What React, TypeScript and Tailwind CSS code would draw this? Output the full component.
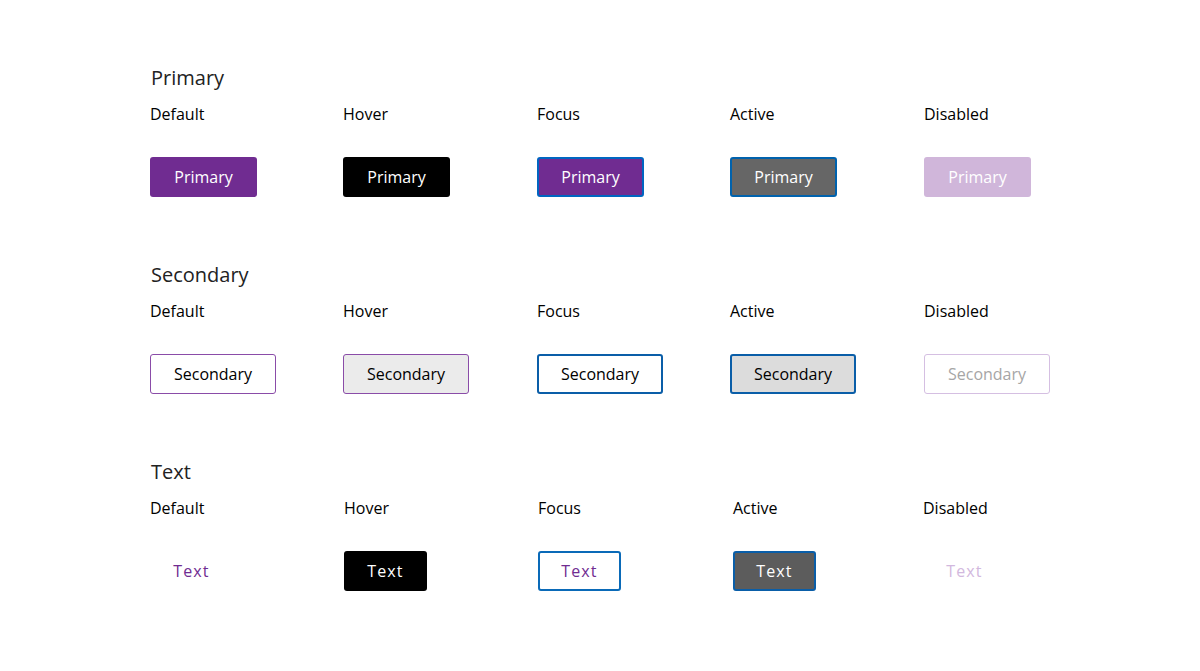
import React from "react";

const states = ["Default", "Hover", "Focus", "Active", "Disabled"];

const base =
  "h-10 rounded-[3px] text-[16px] leading-none flex items-center justify-center";

const Section = ({
  title,
  cols,
  children,
}: {
  title: string;
  cols: string;
  children: React.ReactNode[];
}) => (
  <section className="h-[197px]">
    <h2 className="text-[20px] leading-7 text-[#222] pl-px">{title}</h2>
    <div className={`grid ${cols} mt-[10px]`}>
      {states.map((s, i) => (
        <div key={s} className="flex flex-col">
          <span className="text-[16px] leading-6 text-black">{s}</span>
          <div className="mt-[31px]">{children[i]}</div>
        </div>
      ))}
    </div>
  </section>
);

export default function App() {
  return (
    <div
      className="w-[1200px] h-[671px] bg-white pl-[150px] pt-[64px]"
      style={{ fontFamily: '"Open Sans", sans-serif' }}
    >
      <Section title="Primary" cols="grid-cols-[193px_194px_193px_194px_193px]">
        {[
          <button className={`${base} w-[107px] bg-[#702c91] text-white`}>Primary</button>,
          <button className={`${base} w-[107px] bg-black text-white`}>Primary</button>,
          <button className={`${base} w-[107px] bg-[#702c91] text-white border-2 border-[#0065c1]`}>Primary</button>,
          <button className={`${base} w-[107px] bg-[#666666] text-white border-2 border-[#0062ad]`}>Primary</button>,
          <button className={`${base} w-[107px] bg-[#d0b6da] text-white`}>Primary</button>,
        ]}
      </Section>
      <Section title="Secondary" cols="grid-cols-[193px_194px_193px_194px_193px]">
        {[
          <button className={`${base} w-[126px] bg-white text-black border border-[#8a4ca8]`}>Secondary</button>,
          <button className={`${base} w-[126px] bg-[#ebebeb] text-black border border-[#8a4ca8]`}>Secondary</button>,
          <button className={`${base} w-[126px] bg-white text-black border-2 border-[#0a5ea8]`}>Secondary</button>,
          <button className={`${base} w-[126px] bg-[#dcdcdc] text-black border-2 border-[#0a5ea8]`}>Secondary</button>,
          <button className={`${base} w-[126px] bg-white text-[#a6a6a6] border border-[#d5bfe2]`}>Secondary</button>,
        ]}
      </Section>
      <Section title="Text" cols="grid-cols-[194px_194px_195px_190px_193px]">
        {[
          <button className={`${base} w-[83px] tracking-[0.07em] text-[#702c91]`}>Text</button>,
          <button className={`${base} w-[83px] tracking-[0.07em] bg-black text-white`}>Text</button>,
          <button className={`${base} w-[83px] tracking-[0.07em] bg-white text-[#702c91] border-2 border-[#0a6ab8]`}>Text</button>,
          <button className={`${base} w-[83px] tracking-[0.07em] bg-[#5c5c5c] text-white border-2 border-[#0a5ea8]`}>Text</button>,
          <button className={`${base} w-[83px] tracking-[0.07em] text-[#d2b8de]`}>Text</button>,
        ]}
      </Section>
    </div>
  );
}
